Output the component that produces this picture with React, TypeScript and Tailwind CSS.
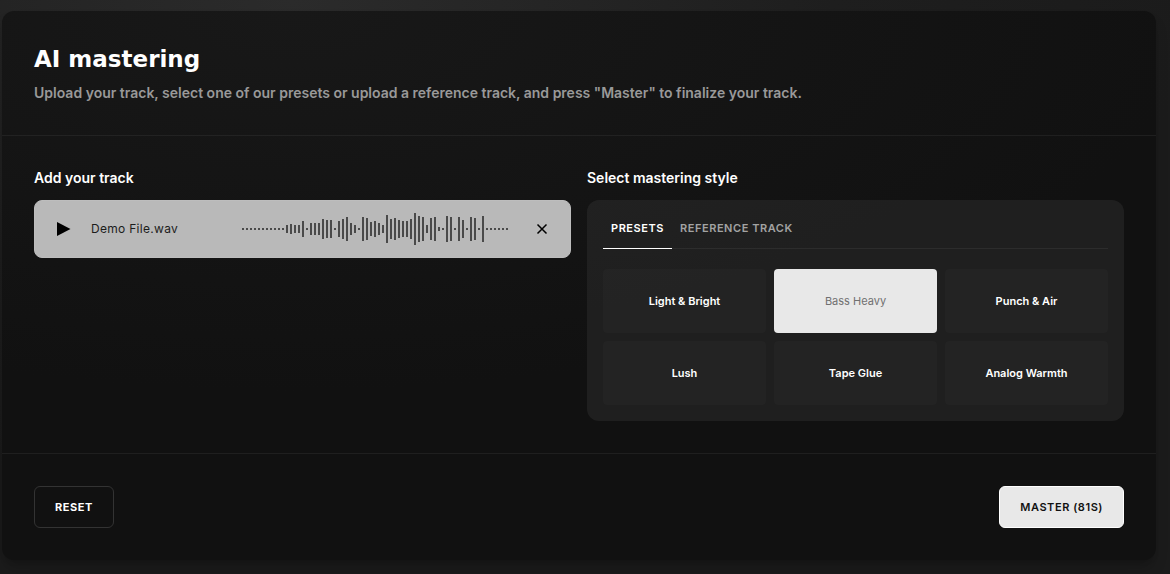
import React, { useState } from 'react';
import clsx from 'clsx';

const presets = ['Light & Bright', 'Bass Heavy', 'Punch & Air', 'Lush', 'Tape Glue', 'Analog Warmth'];

const tabs = ['Presets', 'Reference track'];

// Height of each waveform bar, left to right
const bars = [
  2, 2, 2, 2, 2, 2, 2, 2, 2, 2, 2, 8, 10, 8, 8, 16, 2, 12, 12, 12, 20, 18, 18, 2, 16, 20, 24, 12, 8, 2, 24, 22, 14, 16,
  12, 8, 28, 20, 22, 18, 16, 16, 20, 32, 26, 24, 8, 22, 24, 4, 2, 26, 24, 2, 24, 18, 2, 24, 22, 2, 26, 2, 2, 2, 2, 2, 2,
];

function Waveform() {
  return (
    <svg className="h-8 w-[272px] shrink-0" viewBox="0 0 272 32" fill="#4a4a4a" aria-hidden="true">
      {bars.map((height, i) => (
        <rect key={i} x={i * 4} y={16 - height / 2} width="2" height={height} />
      ))}
    </svg>
  );
}

function TrackCard() {
  return (
    <div className="flex items-center gap-4 rounded-lg border border-[#bdbdbd] bg-[#b9b9b9] px-4 py-3 text-black">
      <button type="button" aria-label="Play" className="flex size-6 shrink-0 items-center justify-center">
        <svg className="size-6" viewBox="0 0 24 24" fill="currentColor">
          <path d="M6 5v14l13.5-7z" />
        </svg>
      </button>
      <span className="min-w-0 flex-1 truncate text-xs tracking-wide text-[#1c1c1c]">Demo File.wav</span>
      <Waveform />
      <button type="button" aria-label="Remove track" className="flex size-6 shrink-0 items-center justify-center">
        <svg className="size-6" viewBox="0 0 24 24" fill="none" stroke="currentColor" strokeWidth="1.5">
          <path d="M7.5 7.5l9 9M16.5 7.5l-9 9" />
        </svg>
      </button>
    </div>
  );
}

function StylePanel() {
  const [tab, setTab] = useState('Presets');
  const [selected, setSelected] = useState('Bass Heavy');

  return (
    <div className="rounded-xl bg-white/6 p-4">
      <div role="tablist" className="flex border-b border-white/6">
        {tabs.map((name) => (
          <button
            key={name}
            type="button"
            role="tab"
            aria-selected={tab === name}
            onClick={() => setTab(name)}
            className={clsx(
              '-mb-px border-b px-2 pb-2 text-[11px] leading-6 font-semibold tracking-wider uppercase',
              tab === name ? 'border-white text-white' : 'border-transparent text-[#a3a3a3]'
            )}
          >
            {name}
          </button>
        ))}
      </div>
      <div className="mt-5 grid grid-cols-3 gap-2">
        {presets.map((name) => (
          <button
            key={name}
            type="button"
            onClick={() => setSelected(name)}
            className={clsx(
              'h-16 rounded text-[11px]',
              selected === name ? 'bg-[#e8e8e8] text-[#707070]' : 'bg-white/2 font-semibold text-white'
            )}
          >
            {name}
          </button>
        ))}
      </div>
    </div>
  );
}

export default function App() {
  return (
    <div className="min-h-screen bg-[#1b1b1b] bg-[radial-gradient(ellipse_900px_500px_at_25%_0%,#2b2b2b,#1e1e1e_60%,#1b1b1b)] pt-[11px] pr-3.5 pb-3.5 pl-0.5 font-['Inter',sans-serif] text-white">
      <main className="rounded-xl bg-[#111111] bg-[radial-gradient(ellipse_900px_380px_at_25%_0%,#181818,#111111)] shadow-lg shadow-black/20">
        <header className="border-b border-white/6 p-8">
          <h1 className="font-['DejaVu_Sans',sans-serif] text-[23px] leading-8 font-bold">AI mastering</h1>
          <p className="mt-2 text-sm leading-5 font-semibold text-[#999999]">
            Upload your track, select one of our presets or upload a reference track, and press "Master" to finalize your
            track.
          </p>
        </header>

        <div className="grid grid-cols-2 gap-4 p-8">
          <section>
            <h2 className="mb-3 text-sm leading-5 font-semibold">Add your track</h2>
            <TrackCard />
          </section>
          <section>
            <h2 className="mb-3 text-sm leading-5 font-semibold">Select mastering style</h2>
            <StylePanel />
          </section>
        </div>

        <footer className="flex items-center justify-between border-t border-white/6 p-8">
          <button
            type="button"
            className="rounded-md border border-[#333333] px-5 py-3 text-[11px] leading-4 font-bold tracking-wider uppercase"
          >
            Reset
          </button>
          <button
            type="button"
            className="rounded-md border border-white bg-[#e8e8e8] px-5 py-3 text-[11px] leading-4 font-semibold tracking-wider text-[#111111] uppercase"
          >
            Master (81s)
          </button>
        </footer>
      </main>
    </div>
  );
}
